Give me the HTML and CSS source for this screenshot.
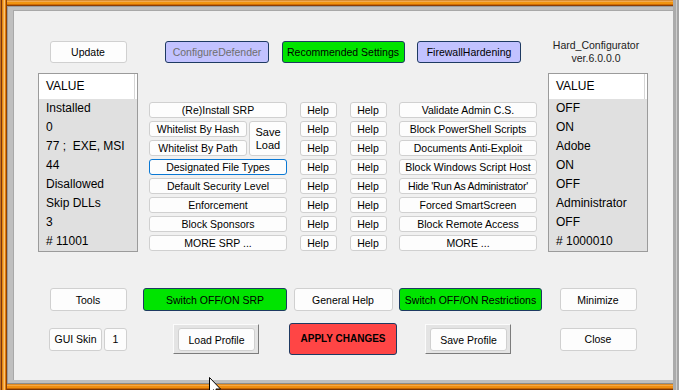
FILE: index.html
```html
<!DOCTYPE html>
<html>
<head>
<meta charset="utf-8">
<title>Hard_Configurator</title>
<link rel="stylesheet" href="styles.css">
</head>
<body>
<div class="win">
  <div class="frame">
    <div class="bevel">
      <div class="client">
        <div class="grid upper">
          <div class="cell"><button class="btn b-top b-update">Update</button></div>
          <div class="cell"><button class="btn b-top lav disabled b-defender">ConfigureDefender</button></div>
          <div class="cell"><button class="btn b-top green b-recommended">Recommended Settings</button></div>
          <div class="cell"><button class="btn b-top lav b-firewall">FirewallHardening</button></div>
          <div class="cell"><div class="title">Hard_Configurator<br>ver.6.0.0.0</div></div>

          <div class="cell top">
            <div class="list">
              <div class="list-head"><span>VALUE</span></div>
              <div class="list-row">Installed</div>
              <div class="list-row">0</div>
              <div class="list-row">77 ;&nbsp; EXE, MSI</div>
              <div class="list-row">44</div>
              <div class="list-row">Disallowed</div>
              <div class="list-row">Skip DLLs</div>
              <div class="list-row">3</div>
              <div class="list-row"># 11001</div>
            </div>
          </div>

          <div class="cell top">
            <div class="srp">
              <button class="btn wide">(Re)Install SRP</button>
              <button class="btn">Whitelist By Hash</button>
              <button class="btn saveload">Save<br>Load</button>
              <button class="btn">Whitelist By Path</button>
              <button class="btn wide focus">Designated File Types</button>
              <button class="btn wide">Default Security Level</button>
              <button class="btn wide">Enforcement</button>
              <button class="btn wide">Block Sponsors</button>
              <button class="btn wide">MORE SRP ...</button>
            </div>
          </div>

          <div class="cell top">
            <div class="helps">
              <button class="btn">Help</button><button class="btn">Help</button>
              <button class="btn">Help</button><button class="btn">Help</button>
              <button class="btn">Help</button><button class="btn">Help</button>
              <button class="btn">Help</button><button class="btn">Help</button>
              <button class="btn">Help</button><button class="btn">Help</button>
              <button class="btn">Help</button><button class="btn">Help</button>
              <button class="btn">Help</button><button class="btn">Help</button>
              <button class="btn">Help</button><button class="btn">Help</button>
            </div>
          </div>

          <div class="cell top">
            <div class="restr">
              <button class="btn">Validate Admin C.S.</button>
              <button class="btn">Block PowerShell Scripts</button>
              <button class="btn">Documents Anti-Exploit</button>
              <button class="btn">Block Windows Script Host</button>
              <button class="btn tight">Hide 'Run As Administrator'</button>
              <button class="btn">Forced SmartScreen</button>
              <button class="btn">Block Remote Access</button>
              <button class="btn">MORE ...</button>
            </div>
          </div>

          <div class="cell top">
            <div class="list">
              <div class="list-head"><span>VALUE</span></div>
              <div class="list-row">OFF</div>
              <div class="list-row">ON</div>
              <div class="list-row">Adobe</div>
              <div class="list-row">ON</div>
              <div class="list-row">OFF</div>
              <div class="list-row">Administrator</div>
              <div class="list-row">OFF</div>
              <div class="list-row"># 1000010</div>
            </div>
          </div>
        </div>

        <div class="grid lower">
          <div class="cell"><button class="btn b-low b-tools">Tools</button></div>
          <div class="cell"><button class="btn b-low green b-switch-srp">Switch OFF/ON SRP</button></div>
          <div class="cell"><button class="btn b-low b-help">General Help</button></div>
          <div class="cell"><button class="btn b-low green b-switch-restr">Switch OFF/ON Restrictions</button></div>
          <div class="cell"><button class="btn b-low b-tools">Minimize</button></div>

          <div class="cell">
            <div class="skin">
              <button class="btn b-low b-skin">GUI Skin</button>
              <button class="btn b-low b-one">1</button>
            </div>
          </div>
          <div class="cell"><div class="raised"><button class="btn b-low b-tools">Load Profile</button></div></div>
          <div class="cell"><button class="btn red b-apply">APPLY CHANGES</button></div>
          <div class="cell"><div class="raised"><button class="btn b-low b-tools">Save Profile</button></div></div>
          <div class="cell"><button class="btn b-low b-tools">Close</button></div>
        </div>
      </div>
    </div>
  </div>
  <div class="rstrip"></div>
  <svg class="cursor" width="12" height="20" viewBox="0 0 12 20"><path d="M0.5 0.5 V16.5 L4.5 12.7 L7 18.5 L9.3 17.5 L6.9 12 H11.5 Z" fill="#fff" stroke="#000" stroke-width="1"/></svg>
</div>
</body>
</html>
```

FILE: styles.css
```css
html, body {
  margin: 0;
  padding: 0;
  background: #f0f0f0;
  font-family: "Liberation Sans", Arial, sans-serif;
}

.win {
  position: relative;
  display: flex;
  width: 679px;
  height: 390px;
  overflow: hidden;
}

.frame {
  flex: 1;
  box-sizing: border-box;
  height: 390px;
  padding: 6px 0 7px 7px;
  background:
    linear-gradient(to right, #c8741c 0 1px, #7a3410 1px 2px, #e5870e 2px 3px, #f3a640 3px 4px, #f8c274 4px 5px, #e27c08 5px 6px, #8a4008 6px 7px) left top / 7px 100% no-repeat,
    linear-gradient(to bottom, #d98c34 0 1px, #f2aa50 1px 2px, #f09410 2px 4px, #d06c04 4px 5px, #8a3e06 5px 6px) left top / 100% 6px no-repeat,
    linear-gradient(to bottom, #8c8c8c 0 1px, #e08a20 1px 2px, #f4a848 2px 3px, #ef8e10 3px 5px, #c46404 5px 6px, #7a3604 6px 7px) left bottom / 100% 7px no-repeat;
}

.bevel {
  box-sizing: border-box;
  height: 100%;
  padding: 4px 0 3px 6px;
  background: #bfbfbf;
  box-shadow: inset 1px 1px 0 #9a9a9a;
}

.client {
  box-sizing: border-box;
  height: 100%;
  padding-top: 31px;
  background: #f0f0f0;
  box-shadow: inset 1px 1px 0 #a8a8a8;
}

.rstrip {
  width: 6px;
  flex: none;
  background: linear-gradient(to right, #ababab 0 3px, #cdcdcd 3px 4px, #a4a4a4 4px 6px);
}

.cursor {
  position: absolute;
  left: 209px;
  top: 377px;
}

.grid {
  display: grid;
  grid-template-columns: 132px 126px 126px 126px 132px;
  padding-left: 9px;
}

.upper {
  grid-template-rows: 22px 179px;
  row-gap: 10px;
}

.lower {
  grid-template-rows: 23px 32px;
  row-gap: 12px;
  margin-top: 36px;
}

.cell {
  display: flex;
  justify-content: center;
  align-items: center;
  min-width: 0;
}

.cell > * {
  flex: none;
}

.cell.top {
  align-items: flex-start;
}

.btn {
  box-sizing: border-box;
  display: flex;
  align-items: center;
  justify-content: center;
  flex: none;
  margin: 0;
  padding: 0;
  font-family: "Liberation Sans", Arial, sans-serif;
  font-size: 10.5px;
  line-height: 12px;
  color: #000;
  background: #fdfdfd;
  border: 1px solid #d0d0d0;
  border-radius: 3px;
  white-space: nowrap;
  text-align: center;
}

.lav {
  background: #c2c2ff;
  border-color: #1e3a62;
}

.green {
  background: #00e400;
  border-color: #1e3a62;
}

.red {
  background: #ff4545;
  border-color: #1e3a62;
  font-weight: bold;
  font-size: 10px;
}

.disabled {
  color: #6e6e6e;
}

.focus {
  border-color: #0a78d4;
}

.tight {
  letter-spacing: -0.25px;
}

.b-top { height: 22px; }
.b-update { width: 77px; }
.b-defender { width: 104px; }
.b-recommended { width: 123px; }
.b-firewall { width: 104px; }

.title {
  margin-right: 4px;
  font-size: 10.5px;
  line-height: 13px;
  text-align: center;
  color: #222;
}

.list {
  box-sizing: border-box;
  width: 100px;
  height: 179px;
  border: 1px solid #9b9b9b;
  background: #e0e0e0;
  font-size: 12px;
  color: #000;
}

.list-head {
  display: flex;
  height: 25px;
  padding-right: 2px;
  background: #fff;
}

.list-head span {
  flex: 1;
  padding-left: 7px;
  line-height: 25px;
  border-right: 1px solid #d6d6d6;
}

.list-row {
  height: 19px;
  line-height: 19px;
  padding-left: 7px;
  white-space: nowrap;
}

.srp {
  display: grid;
  grid-template-columns: 98px 38px;
  grid-template-rows: repeat(8, 16px);
  column-gap: 2px;
  row-gap: 3px;
  margin-top: 29px;
  margin-left: 2px;
}

.srp .wide {
  grid-column: 1 / 3;
}

.srp .saveload {
  grid-column: 2;
  grid-row: 2 / 4;
  line-height: 13px;
  font-size: 11px;
}

.helps {
  display: grid;
  grid-template-columns: 37px 37px;
  grid-template-rows: repeat(8, 16px);
  column-gap: 13px;
  row-gap: 3px;
  margin-top: 29px;
}

.restr {
  display: flex;
  flex-direction: column;
  gap: 3px;
  width: 138px;
  margin-top: 29px;
  margin-right: 2px;
}

.restr .btn {
  height: 16px;
}

.b-low { height: 23px; }
.b-tools { width: 77px; }
.b-switch-srp { width: 144px; margin-right: 4px; }
.b-help { width: 99px; }
.b-switch-restr { width: 143px; margin-left: 3px; }

.skin {
  display: flex;
  gap: 2px;
}

.b-skin { width: 53px; }
.b-one { width: 23px; }

.raised {
  box-sizing: border-box;
  width: 86px;
  height: 30px;
  padding: 3px 3px 2px 4px;
  margin-right: 2px;
  background: #e4e4e4;
  border: 1px solid;
  border-color: #fbfbfb #7c7c7c #7c7c7c #fbfbfb;
}

.b-apply {
  width: 108px;
  height: 32px;
}
```
